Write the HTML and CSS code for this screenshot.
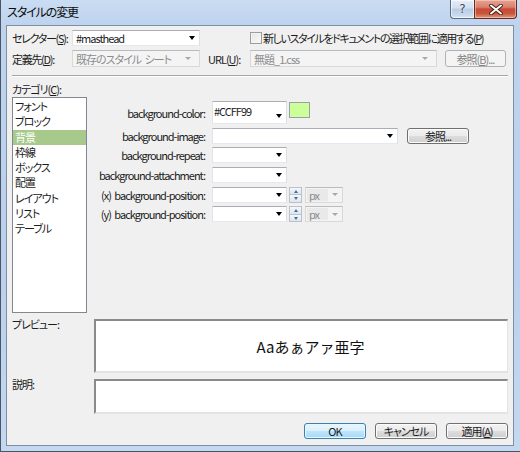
FILE: index.html
```html
<!DOCTYPE html>
<html lang="ja">
<head>
<meta charset="utf-8">
<title>スタイルの変更</title>
<link rel="stylesheet" href="styles.css">
</head>
<body>
<div class="window">
  <div class="titlebar">
    <span class="title">スタイルの変更</span>
    <div class="caption">
      <span class="cap-btn help">?</span>
      <span class="cap-btn close">
        <svg width="14" height="11" viewBox="0 0 14 11"><path d="M2 1.5 L12 9.5 M12 1.5 L2 9.5" stroke="#3a1a14" stroke-width="3.6" stroke-linecap="round"/><path d="M2 1.5 L12 9.5 M12 1.5 L2 9.5" stroke="#ffffff" stroke-width="2" stroke-linecap="round"/></svg>
      </span>
    </div>
  </div>
  <div class="client">
    <div class="row row1">
      <span class="lbl w60">セレクター(<u>S</u>):</span>
      <div class="combo w128"><span class="val">#masthead</span><span class="arrow"></span></div>
      <span class="check"></span>
      <span class="check-lbl">新しいスタイルをドキュメントの選択範囲に適用する(<u>P</u>)</span>
    </div>
    <div class="row row2">
      <span class="lbl w60">定義先(<u>D</u>):</span>
      <div class="combo dis w128"><span class="val">既存のスタイル シート</span><span class="arrow"></span></div>
      <span class="lbl url-lbl">URL(<u>U</u>):</span>
      <div class="combo dis url"><span class="val">無題_1.css</span><span class="arrow"></span></div>
      <span class="btn dis-btn ref-top">参照(<u>B</u>)...</span>
    </div>
    <div class="sep"></div>
    <div class="cat-lbl">カテゴリ(<u>C</u>):</div>
    <div class="main">
      <ul class="list">
        <li>フォント</li>
        <li>ブロック</li>
        <li class="sel">背景</li>
        <li>枠線</li>
        <li>ボックス</li>
        <li>配置</li>
        <li>レイアウト</li>
        <li>リスト</li>
        <li>テーブル</li>
      </ul>
      <div class="props">
        <span class="plbl">background-color:</span>
        <div class="pctl top">
          <div class="combo tall"><span class="val">#CCFF99</span><span class="arrow"></span></div>
          <span class="swatch"></span>
        </div>
        <span class="plbl">background-image:</span>
        <div class="pctl">
          <div class="combo wide"><span class="val"></span><span class="arrow"></span></div>
          <span class="btn ref-img">参照...</span>
        </div>
        <span class="plbl">background-repeat:</span>
        <div class="pctl">
          <div class="combo w75"><span class="val"></span><span class="arrow"></span></div>
        </div>
        <span class="plbl">background-attachment:</span>
        <div class="pctl">
          <div class="combo w75"><span class="val"></span><span class="arrow"></span></div>
        </div>
        <span class="plbl">(x) background-position:</span>
        <div class="pctl">
          <div class="combo w75"><span class="val"></span><span class="arrow"></span></div>
          <span class="spin"><span class="up"></span><span class="dn"></span></span>
          <div class="combo dis unit"><span class="val"><span class="px">px</span></span><span class="arrow"></span></div>
        </div>
        <span class="plbl">(y) background-position:</span>
        <div class="pctl">
          <div class="combo w75"><span class="val"></span><span class="arrow"></span></div>
          <span class="spin"><span class="up"></span><span class="dn"></span></span>
          <div class="combo dis unit"><span class="val"><span class="px">px</span></span><span class="arrow"></span></div>
        </div>
      </div>
    </div>
    <div class="box-row preview-row">
      <span class="box-lbl">プレビュー:</span>
      <div class="sunken preview"><span class="sample">Aaあぁアァ亜字</span></div>
    </div>
    <div class="box-row desc-row">
      <span class="box-lbl">説明:</span>
      <div class="sunken desc"></div>
    </div>
    <div class="buttons">
      <span class="btn def">OK</span>
      <span class="btn">キャンセル</span>
      <span class="btn">適用(<u>A</u>)</span>
    </div>
  </div>
</div>
</body>
</html>
```
FILE: styles.css
```css
* { box-sizing: border-box; }
html, body { margin: 0; padding: 0; }
body {
  width: 520px;
  height: 452px;
  overflow: hidden;
  font-family: "Noto Sans CJK JP", sans-serif;
  font-size: 11px;
  letter-spacing: -1px;
  word-spacing: 2px;
  color: #1b1b1b;
  font-feature-settings: "palt";
  background: #bcd2ee;
}
u { text-decoration: underline; text-underline-offset: 1px; }

.window {
  width: 520px;
  height: 452px;
  display: flex;
  flex-direction: column;
  padding: 0 6px 5px 5px;
  border-left: 1px solid #4a5565;
  border-bottom: 1px solid #4a5565;
  background: linear-gradient(#c9dcf2, #bed3ee 25px, #bad0ec 60%, #c4d8f0);
}

.titlebar {
  height: 25px;
  flex: none;
  display: flex;
  align-items: flex-start;
}
.title {
  padding: 4px 0 0 1px;
  font-size: 12px;
  letter-spacing: -1.1px;
  color: #0b0b0b;
  line-height: 16px;
}
.caption {
  margin-left: auto;
  margin-right: -3px;
  display: flex;
}
.cap-btn {
  height: 19px;
  display: flex;
  align-items: center;
  justify-content: center;
  border: 1px solid #5b6b80;
  border-top: none;
}
.help {
  width: 24px;
  border-radius: 0 0 0 4px;
  border-right: none;
  background: linear-gradient(#e6eef8, #d2dff0 45%, #b9cce5 50%, #c9daee 85%, #dbe7f5);
  font-family: "DejaVu Sans", sans-serif;
  font-size: 12px;
  letter-spacing: 0;
  color: #3e4a5c;
  text-shadow: 0 0 2px #ffffff;
  box-shadow: inset 0 0 0 1px rgba(255,255,255,0.6);
}
.close {
  width: 43px;
  border-radius: 0 0 4px 0;
  border-color: #6b2a20;
  background: linear-gradient(#e6a494, #d8806c 40%, #c74b35 50%, #c9553b 75%, #e09a7e);
  box-shadow: inset 0 0 0 1px rgba(255,220,210,0.5);
}

.client {
  flex: 1;
  background: #f0f0f0;
  border: 1px solid #7f8ea1;
  padding: 0 5px 0 5px;
  display: flex;
  flex-direction: column;
}

.row {
  display: flex;
  align-items: center;
  flex: none;
}
.row1 { margin-top: 4px; height: 16px; }
.row2 { margin-top: 4px; height: 17px; }
.lbl { white-space: nowrap; }
.w60 { width: 60px; flex: none; letter-spacing: -1.3px; }

.combo {
  display: flex;
  align-items: center;
  height: 100%;
  background: #ffffff;
  border: 1px solid;
  border-color: #abadb3 #dbdfe6 #e3e9ef #e2e3ea;
  padding-left: 3px;
  flex: none;
  white-space: nowrap;
  overflow: hidden;
}
.combo .val { flex: 1; }
.combo .arrow {
  flex: none;
  width: 0;
  height: 0;
  margin: 0 4px 0 4px;
  border-left: 3.5px solid transparent;
  border-right: 3.5px solid transparent;
  border-top: 4px solid #000000;
}
.combo.dis {
  background: #f4f4f4;
  border-color: #b8bcc0 #d9d9d9 #d9d9d9 #d9d9d9;
  color: #8c8c8c;
}
.combo.dis .arrow {
  border-left-width: 3px;
  border-right-width: 3px;
  border-top: 3px solid #a8a8a8;
  margin-right: 8px;
}
.w128 { width: 128px; }
.w75 { width: 75px; height: 16px; }

.check {
  width: 12px;
  height: 12px;
  margin-left: 50px;
  flex: none;
  border: 1px solid #9d9d9d;
  background: linear-gradient(135deg, #e4e4e4, #fbfbfb);
  box-shadow: inset 0 0 0 1px #f4f4f4;
}
.check-lbl { margin-left: 1px; white-space: nowrap; letter-spacing: -1.4px; }

.url-lbl { margin-left: 8px; width: 42px; flex: none; }
.url { width: 187px; }

.btn {
  display: flex;
  align-items: center;
  justify-content: center;
  height: 16px;
  width: 62px;
  flex: none;
  border: 1px solid #707070;
  border-radius: 3px;
  background: linear-gradient(#f2f2f2, #ebebeb 50%, #dddddd 50%, #cfcfcf);
  box-shadow: inset 0 0 0 1px #fbfbfb;
  color: #1b1b1b;
  white-space: nowrap;
  line-height: 14px;
}
.btn.def {
  border-color: #3c7fb1;
  background: linear-gradient(#eaf6fd, #d9f0fc 50%, #bee6fd 50%, #a7d9f5);
  box-shadow: inset 0 0 0 1px #e8f6fd;
}
.dis-btn {
  border-color: #adb2b5;
  background: #f4f4f4;
  box-shadow: none;
  color: #838383;
}
.ref-top { margin-left: 8px; width: 61px; height: 17px; }

.sep {
  flex: none;
  margin-top: 8px;
  height: 2px;
  border-top: 1px solid #a7a7a7;
  border-bottom: 1px solid #ffffff;
}
.cat-lbl {
  flex: none;
  margin-top: 5px;
  height: 14px;
  line-height: 14px;
}

.main {
  flex: none;
  margin-top: 1px;
  height: 216px;
  display: flex;
  align-items: flex-start;
}
.list {
  list-style: none;
  margin: 0;
  padding: 1px 0 0 0;
  width: 75px;
  height: 216px;
  flex: none;
  background: #ffffff;
  border: 1px solid #828790;
}
.list li {
  height: 15.3px;
  line-height: 15.3px;
  padding-left: 2px;
  white-space: nowrap;
}
.list li.sel {
  background: #a7c98b;
  color: #ffffff;
}

.props {
  margin-top: 4px;
  display: grid;
  grid-template-columns: 118px auto;
  column-gap: 7px;
  row-gap: 3.7px;
}
.plbl {
  text-align: right;
  align-self: center;
  white-space: nowrap;
  line-height: 14px;
}
.pctl {
  display: flex;
  align-items: center;
  height: 16px;
}
.pctl.top { height: 23px; align-items: flex-start; }
.combo.tall {
  width: 75px;
  height: 23px;
  align-items: flex-start;
  padding-top: 1px;
  padding-left: 1px;
}
.combo.tall .arrow { margin-top: 11px; }
.swatch {
  width: 21px;
  height: 16px;
  margin-left: 2px;
  margin-top: 1px;
  background: #ccff99;
  border: 1px solid #9aa0a6;
}
.combo.wide { width: 186px; height: 16px; }
.ref-img { margin-left: 9px; height: 16px; }

.spin {
  width: 13px;
  height: 16px;
  margin-left: 2px;
  display: flex;
  flex-direction: column;
  flex: none;
}
.spin span {
  flex: 1;
  border: 1px solid #b9c2cc;
  background: linear-gradient(#f6f8fa, #dfe5ea);
  display: flex;
  align-items: center;
  justify-content: center;
}
.spin .dn { border-top: none; }
.spin .up::after {
  content: "";
  border-left: 2.5px solid transparent;
  border-right: 2.5px solid transparent;
  border-bottom: 3px solid #3f6fa8;
}
.spin .dn::after {
  content: "";
  border-left: 2.5px solid transparent;
  border-right: 2.5px solid transparent;
  border-top: 3px solid #3f6fa8;
}
.combo.unit {
  width: 38px;
  height: 16px;
  margin-left: 3px;
  padding-left: 1px;
}
.px {
  display: inline-block;
  width: 21px;
  padding-left: 2px;
  background: #e9e9e9;
  line-height: 12px;
}

.box-row {
  flex: none;
  display: flex;
  align-items: flex-start;
}
.box-lbl {
  width: 82px;
  flex: none;
  line-height: 12px;
  margin-top: -1px;
}
.preview-row { margin-top: 6px; height: 54px; }
.desc-row { margin-top: 6px; height: 35px; }
.sunken {
  flex: 1;
  height: 100%;
  background: #ffffff;
  border-style: solid;
  border-width: 2px 1px 2px 2px;
  border-color: #8a8a8a #e3e3e3 #e3e3e3 #8a8a8a;
}
.preview {
  display: flex;
  align-items: center;
  justify-content: center;
}
.sample {
  font-family: "Noto Sans CJK JP", sans-serif;
  font-feature-settings: normal;
  letter-spacing: 0;
  font-size: 15px;
  color: #111111;
  margin-left: 18px;
}

.buttons {
  flex: none;
  margin-top: 9px;
  display: flex;
  justify-content: flex-end;
  gap: 9px;
}
```
